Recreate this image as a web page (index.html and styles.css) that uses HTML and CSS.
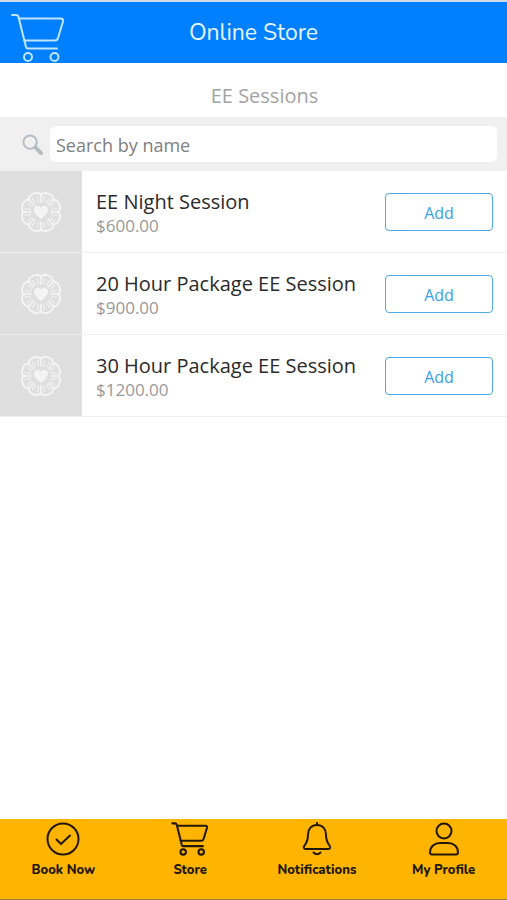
FILE: index.html
```html
<!DOCTYPE html>
<html lang="en">
<head>
  <meta charset="UTF-8">
  <meta name="viewport" content="width=device-width, initial-scale=1.0">
  <title>Online Store</title>
  <link rel="stylesheet" href="styles.css">
</head>
<body>
  <!-- Shared icons -->
  <svg class="sprite" aria-hidden="true">
    <symbol id="cart" viewBox="0 0 54 50">
      <path d="M1 2h4q2 0 2.500 2L15 34q.5 1.500 2 1.500h29M8 5.500h41.500q3 0 2.500 3l-5 16.500q-.6 2.500-3 2.500H13"/>
      <circle cx="17" cy="44" r="4"/>
      <circle cx="43.500" cy="44" r="4"/>
    </symbol>
    <symbol id="petal" viewBox="0 0 42 42">
      <path class="rim" d="M14.700 5.800C13.500-.4 28.500-.4 27.300 5.800"/>
      <path d="M14.700 5.800L17.500 11.500M27.300 5.800L24.500 11.500M19.500 10.500L18 5M22.500 10.500L24 5"/>
    </symbol>
    <symbol id="flower" viewBox="0 0 42 42">
      <g transform="rotate(22.500 21 21)">
        <use href="#petal"/>
        <use href="#petal" transform="rotate(45 21 21)"/>
        <use href="#petal" transform="rotate(90 21 21)"/>
        <use href="#petal" transform="rotate(135 21 21)"/>
        <use href="#petal" transform="rotate(180 21 21)"/>
        <use href="#petal" transform="rotate(225 21 21)"/>
        <use href="#petal" transform="rotate(270 21 21)"/>
        <use href="#petal" transform="rotate(315 21 21)"/>
      </g>
      <path class="heart" d="M21 28C17 24.500 14 22 14 18.500c0-4 5.500-5 7-1.500 1.500-3.500 7-2.500 7 1.500 0 3.500-3 6-7 9.500z"/>
    </symbol>
  </svg>

  <header class="header">
    <a href="#" class="header-cart" aria-label="Cart">
      <svg class="cart-icon"><use href="#cart"/></svg>
    </a>
    <h1>Online Store</h1>
  </header>

  <main>
    <h2 class="category">EE Sessions</h2>

    <form class="search">
      <label for="search" aria-label="Search">
        <svg class="search-icon" viewBox="0 0 22 22">
          <circle cx="8.500" cy="8.500" r="7"/>
          <path class="handle" d="M14 14l6 6"/>
        </svg>
      </label>
      <input type="text" id="search" placeholder="Search by name">
    </form>

    <ul class="products">
      <li class="product">
        <div class="thumb"><svg><use href="#flower"/></svg></div>
        <div class="info">
          <h3>EE Night Session</h3>
          <p>$600.00</p>
        </div>
        <button type="button" class="add">Add</button>
      </li>
      <li class="product">
        <div class="thumb"><svg><use href="#flower"/></svg></div>
        <div class="info">
          <h3>20 Hour Package EE Session</h3>
          <p>$900.00</p>
        </div>
        <button type="button" class="add">Add</button>
      </li>
      <li class="product">
        <div class="thumb"><svg><use href="#flower"/></svg></div>
        <div class="info">
          <h3>30 Hour Package EE Session</h3>
          <p>$1200.00</p>
        </div>
        <button type="button" class="add">Add</button>
      </li>
    </ul>
  </main>

  <nav class="tabs">
    <a href="#">
      <svg viewBox="0 0 36 34">
        <circle cx="18" cy="17" r="15.500"/>
        <path d="M11.500 17.500l4.500 4.500 9-8.500"/>
      </svg>
      Book Now
    </a>
    <a href="#">
      <svg class="tab-cart"><use href="#cart"/></svg>
      Store
    </a>
    <a href="#">
      <svg viewBox="0 0 36 34">
        <path d="M18 1v2M18 3c-5.500 0-9 4-9 9.500 0 6-1.500 8.500-3.500 11-1.500 2-.5 3.500 1 3.500h23c1.500 0 2.500-1.500 1-3.500-2-2.500-3.500-5-3.500-11C27 7 23.500 3 18 3zM14.500 30.500q3.500 3.500 7 0"/>
      </svg>
      Notifications
    </a>
    <a href="#">
      <svg viewBox="0 0 36 34">
        <circle cx="18" cy="9" r="7.500"/>
        <path d="M6 32.500q-2 0-2-2C4 24.500 8.500 21 14 21h8c5.500 0 10 3.500 10 9.500q0 2-2 2z"/>
      </svg>
      My Profile
    </a>
  </nav>
</body>
</html>
```

FILE: styles.css
```css
* {
  box-sizing: border-box;
}

body {
  margin: 0;
  min-height: 100vh;
  display: flex;
  flex-direction: column;
  font-family: "Open Sans", "Noto Sans", sans-serif;
  background-color: #fff;
  color: #2b2b2b;
}

h1, h2, h3, p {
  margin: 0;
  font-weight: 400;
}

svg {
  display: block;
  fill: none;
  stroke: currentColor;
  stroke-linecap: round;
  stroke-linejoin: round;
}

.sprite {
  position: absolute;
  width: 0;
  height: 0;
}

.header {
  display: grid;
  grid-template-columns: 64px 1fr 64px;
  align-items: center;
  height: 63px;
  border-top: 2px solid #d3dbe6;
  background-color: #007fff;
  color: #e6f6ff;
}

.header h1 {
  font-family: Nunito, "Open Sans", sans-serif;
  font-size: 23px;
  line-height: 30px;
  text-align: center;
}

.header-cart {
  padding: 10px 0 0 11px;
  color: #bfe6ff;
}

.cart-icon {
  width: 54px;
  height: 50px;
  stroke-width: 2;
}

.category {
  padding: 19px 0 7px 22px;
  font-size: 20px;
  line-height: 28px;
  text-align: center;
  color: #a3a3a3;
}

.search {
  display: flex;
  align-items: center;
  gap: 7px;
  padding: 9px 10px 9px 22px;
  background-color: #f0f0f0;
}

.search-icon {
  width: 21px;
  height: 21px;
  color: #b4bbc2;
  stroke-width: 2;
}

.search-icon .handle {
  stroke-width: 4;
}

.search input {
  flex: 1;
  min-width: 0;
  height: 36px;
  padding: 2px 6px 0;
  border: none;
  border-radius: 6px;
  background-color: #fff;
  font-family: inherit;
  font-size: 18px;
  color: #2b2b2b;
}

.search input::placeholder {
  color: #808080;
}

.products {
  margin: 0;
  padding: 0;
  list-style: none;
}

.product {
  display: flex;
  align-items: center;
  gap: 14px;
  height: 82px;
  padding-right: 14px;
  border-bottom: 1px solid #efefef;
}

.thumb {
  display: grid;
  place-items: center;
  align-self: stretch;
  width: 82px;
  background-color: #dfdfdf;
  color: #f4f4f4;
}

.thumb svg {
  width: 42px;
  height: 42px;
  stroke-width: 1;
}

.rim {
  stroke-width: 2;
}

.heart {
  fill: currentColor;
  stroke: none;
}

.info {
  flex: 1;
  padding-top: 2px;
}

.info h3 {
  font-size: 20px;
  line-height: 26px;
}

.info p {
  font-size: 17px;
  line-height: 22px;
  color: #999;
}

.add {
  width: 108px;
  height: 38px;
  padding-top: 3px;
  border: 1px solid #4fa9e6;
  border-radius: 4px;
  background-color: #fff;
  font-family: inherit;
  font-size: 16px;
  color: #3c9fe4;
  cursor: pointer;
}

.tabs {
  display: grid;
  grid-template-columns: repeat(4, 1fr);
  height: 81px;
  margin-top: auto;
  padding-top: 3px;
  border-bottom: 1px solid #9c8136;
  background-color: #ffb400;
}

.tabs a {
  display: flex;
  flex-direction: column;
  align-items: center;
  gap: 4px;
  font-family: Nunito, "Open Sans", sans-serif;
  font-size: 13px;
  font-weight: 800;
  line-height: 20px;
  text-decoration: none;
  color: #21180a;
}

.tabs svg {
  width: 36px;
  height: 34px;
  stroke-width: 2;
}

.tabs .tab-cart {
  width: 38px;
  stroke-width: 3;
}
```
